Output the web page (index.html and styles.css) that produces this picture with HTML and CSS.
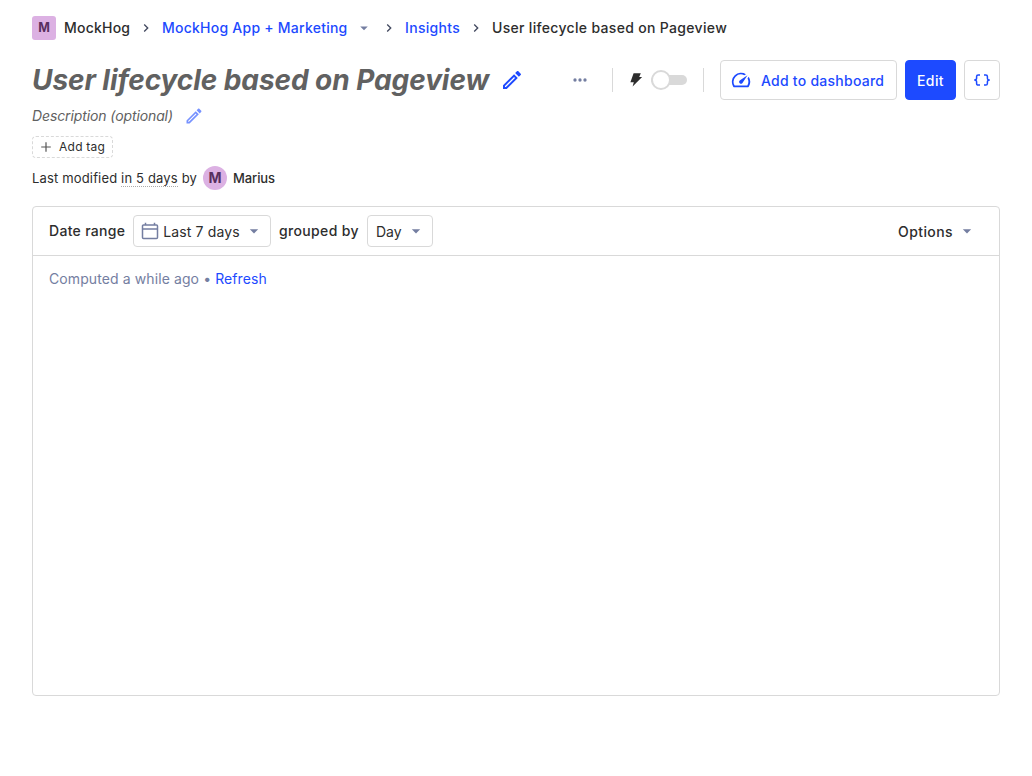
FILE: index.html
```html
<!DOCTYPE html>
<html lang="en">
<head>
<meta charset="utf-8">
<title>User lifecycle based on Pageview</title>
<link rel="stylesheet" href="styles.css">
</head>
<body>
<svg width="0" height="0" class="symbols" aria-hidden="true">
  <symbol id="pencil" viewBox="0 0 24 24"><path d="M14.06 9.02l.92.92L5.92 19H5v-.92l9.06-9.06M17.66 3c-.25 0-.51.1-.7.29l-1.83 1.83 3.75 3.75 1.83-1.83c.39-.39.39-1.02 0-1.41l-2.34-2.34c-.2-.2-.45-.29-.71-.29zm-3.6 3.19L3 17.25V21h3.75L17.81 9.94l-3.75-3.75z"/></symbol>
  <symbol id="caret" viewBox="0 0 24 24"><path d="M7 10l5 5 5-5z"/></symbol>
  <symbol id="chevron" viewBox="0 0 24 24"><path d="M8.6 16.6l4.6-4.6-4.6-4.6L10 6l6 6-6 6z"/></symbol>
</svg>
<nav class="breadcrumbs">
  <span class="lettermark">M</span>
  <span class="crumb crumb-org">MockHog</span>
  <svg class="chevron"><use href="#chevron"/></svg>
  <a class="crumb crumb-project">MockHog App + Marketing</a>
  <svg class="caret crumb-caret"><use href="#caret"/></svg>
  <svg class="chevron"><use href="#chevron"/></svg>
  <a class="crumb crumb-insights">Insights</a>
  <svg class="chevron"><use href="#chevron"/></svg>
  <span class="crumb crumb-current">User lifecycle based on Pageview</span>
</nav>
<header class="page-header">
  <div class="title-group">
    <h1>User lifecycle based on Pageview</h1>
    <svg class="title-pencil"><use href="#pencil"/></svg>
  </div>
  <div class="actions">
    <svg class="more" viewBox="0 0 24 24"><circle cx="6" cy="12" r="2"/><circle cx="12" cy="12" r="2"/><circle cx="18" cy="12" r="2"/></svg>
    <span class="divider"></span>
    <div class="turbo">
      <svg class="bolt" viewBox="0 0 14 16"><path d="M4.6 1.3h7.2L10.2 5h2.9L3.6 14.5l1.2-4.3H1.4z"/></svg>
      <span class="switch"><span class="switch-handle"></span></span>
    </div>
    <span class="divider"></span>
    <button class="button dashboard-button"><svg class="gauge" viewBox="0 0 24 24"><path d="M20.38 8.57l-1.23 1.85a8 8 0 0 1-.22 7.58H5.07A8 8 0 0 1 15.58 6.85l1.85-1.23A10 10 0 0 0 3.35 19a2 2 0 0 0 1.72 1h13.85a2 2 0 0 0 1.74-1 10 10 0 0 0-.27-10.44zM10.59 15.41a2 2 0 0 0 2.83 0l5.66-8.49-8.49 5.66a2 2 0 0 0 0 2.83z"/></svg><span>Add to dashboard</span></button>
    <button class="button edit-button"><span>Edit</span></button>
    <button class="button code-button"><svg class="braces" viewBox="0 0 18 14"><path d="M7 2H5.2Q3.6 2 3.6 3.6v1.6Q3.6 7 1.2 7q2.4 0 2.4 1.8v1.6Q3.6 12 5.2 12H7M11 2h1.8q1.6 0 1.6 1.6v1.6Q14.4 7 16.8 7q-2.4 0-2.4 1.8v1.6q0 1.6-1.6 1.6H11"/></svg></button>
  </div>
</header>
<div class="description"><span>Description (optional)</span><svg class="description-pencil"><use href="#pencil"/></svg></div>
<div class="tag"><svg class="plus" viewBox="0 0 14 14"><path d="M7 2.2v9.6M2.2 7h9.6"/></svg>Add tag</div>
<div class="modified"><span class="modified-text">Last modified <span class="time">in 5 days</span> by</span><span class="avatar">M</span><span class="author">Marius</span></div>
<main class="card">
  <div class="filters">
    <span class="filter-label">Date range</span>
    <button class="select date-select"><svg class="calendar" viewBox="0 0 18 18"><path d="M2.5 3h13a1 1 0 0 1 1 1v11.5a1 1 0 0 1-1 1h-13a1 1 0 0 1-1-1V4a1 1 0 0 1 1-1zM1.5 7h15M4.5 3V.7M13.5 3V.7"/></svg><span>Last 7 days</span><svg class="caret"><use href="#caret"/></svg></button>
    <span class="filter-label grouped">grouped by</span>
    <button class="select day-select"><span>Day</span><svg class="caret"><use href="#caret"/></svg></button>
    <button class="options"><span>Options</span><svg class="caret"><use href="#caret"/></svg></button>
  </div>
  <div class="computed">Computed a while ago • <a>Refresh</a></div>
</main>
</body>
</html>
```
FILE: styles.css
```css
* { box-sizing: border-box; }
body { margin: 0; padding: 16px 32px 0; background: #fff; color: #2d2d2d; font: 14px/20px Inter, sans-serif; white-space: nowrap; }
svg { display: block; flex: none; fill: currentColor; }
button { margin: 0; padding: 0; border: 0; background: none; color: inherit; font: inherit; display: flex; align-items: center; }
button span { padding-top: 2px; }
a { color: #1d4aff; }
.symbols { position: absolute; }
.breadcrumbs { display: flex; align-items: center; height: 24px; font-weight: 500; }
.lettermark, .avatar { display: flex; align-items: center; justify-content: center; width: 24px; height: 24px; background: #dcb1e3; color: #572e5e; font-weight: 700; }
.lettermark { border-radius: 3px; margin-right: 8px; font-size: 12.5px; }
.crumb-org { width: 66px; letter-spacing: .22px; }
.crumb-project { width: 185px; letter-spacing: .24px; }
.crumb-insights { width: 55px; letter-spacing: .32px; }
.crumb-current { letter-spacing: .32px; }
.chevron { width: 16px; height: 16px; margin: 0 8px; color: #42495f; }
.caret { width: 20px; height: 20px; color: #747ea1; }
.crumb-caret { width: 18px; height: 18px; margin: 0 0 0 8px; }
.page-header { display: flex; align-items: center; justify-content: space-between; height: 40px; margin-top: 20px; }
.title-group { display: flex; align-items: center; }
h1 { margin: 0; width: 457px; font-size: 28px; line-height: 40px; font-style: italic; font-weight: 700; letter-spacing: -.07px; color: #616161; }
.title-pencil { width: 24px; height: 24px; margin-left: 11px; color: #1d4aff; }
.actions { display: flex; align-items: center; }
.more { width: 20px; height: 20px; margin-right: 22px; color: #747ea1; }
.divider { width: 1px; height: 24px; background: #d9d9d9; }
.turbo { display: flex; align-items: center; width: 90px; padding-left: 16px; }
.bolt { width: 14px; height: 16px; margin-right: 8px; }
.switch { display: flex; align-items: center; width: 36px; height: 10px; border-radius: 5px; background: #d9d9d9; }
.switch-handle { flex: none; width: 20px; height: 20px; border: 2px solid #d9d9d9; border-radius: 50%; background: #fff; }
.button { height: 40px; border: 1px solid #d9d9d9; border-radius: 4px; color: #1d4aff; font-weight: 500; justify-content: center; }
.dashboard-button { width: 177px; margin-left: 16px; padding-left: 9px; justify-content: flex-start; letter-spacing: .25px; }
.gauge { width: 22px; height: 22px; margin-right: 9px; }
.edit-button { width: 51px; margin-left: 8px; border-color: #1d4aff; background: #1d4aff; color: #fff; letter-spacing: .4px; }
.code-button { width: 36px; margin-left: 8px; }
.braces { width: 18px; height: 14px; fill: none; stroke: currentColor; stroke-width: 1.5; }
.description { display: flex; align-items: center; height: 24px; margin-top: 4px; font-style: italic; letter-spacing: -.11px; color: #616161; }
.description span { width: 141px; }
.description-pencil { width: 20px; height: 20px; margin-left: 11px; color: #7792ff; }
.tag { display: flex; align-items: center; width: 81px; height: 22px; margin-top: 8px; padding-left: 6px; border: 1px dashed #d9d9d9; border-radius: 4px; font-size: 12px; letter-spacing: .25px; }
.plus { width: 14px; height: 14px; margin-right: 6px; fill: none; stroke: #555; stroke-width: 1.2; }
.modified { display: flex; align-items: center; height: 24px; margin-top: 8px; font-size: 13px; }
.modified-text { width: 165px; letter-spacing: .16px; }
.time { border-bottom: 1px dotted #aaa; }
.avatar { margin: 0 6px; border-radius: 50%; font-size: 14px; }
.author { font-weight: 500; letter-spacing: -.1px; }
.card { height: 490px; margin-top: 16px; border: 1px solid #d9d9d9; border-radius: 4px; }
.filters { display: flex; align-items: center; height: 49px; padding: 0 16px; border-bottom: 1px solid #d9d9d9; }
.filter-label { width: 76px; font-weight: 500; letter-spacing: .3px; }
.grouped { width: 80px; letter-spacing: .35px; }
.select { height: 32px; margin: 0 8px; padding: 0 6px 0 8px; border: 1px solid #d9d9d9; border-radius: 4px; justify-content: space-between; }
.date-select { width: 138px; padding-left: 7px; letter-spacing: .12px; }
.day-select { width: 66px; }
.calendar { width: 18px; height: 18px; fill: none; stroke: #747ea1; stroke-width: 1.5; }
.options { margin-left: auto; padding-right: 6px; gap: 4px; font-weight: 500; letter-spacing: .4px; }
.computed { padding: 13px 16px; color: #747ea1; letter-spacing: .1px; }
```
